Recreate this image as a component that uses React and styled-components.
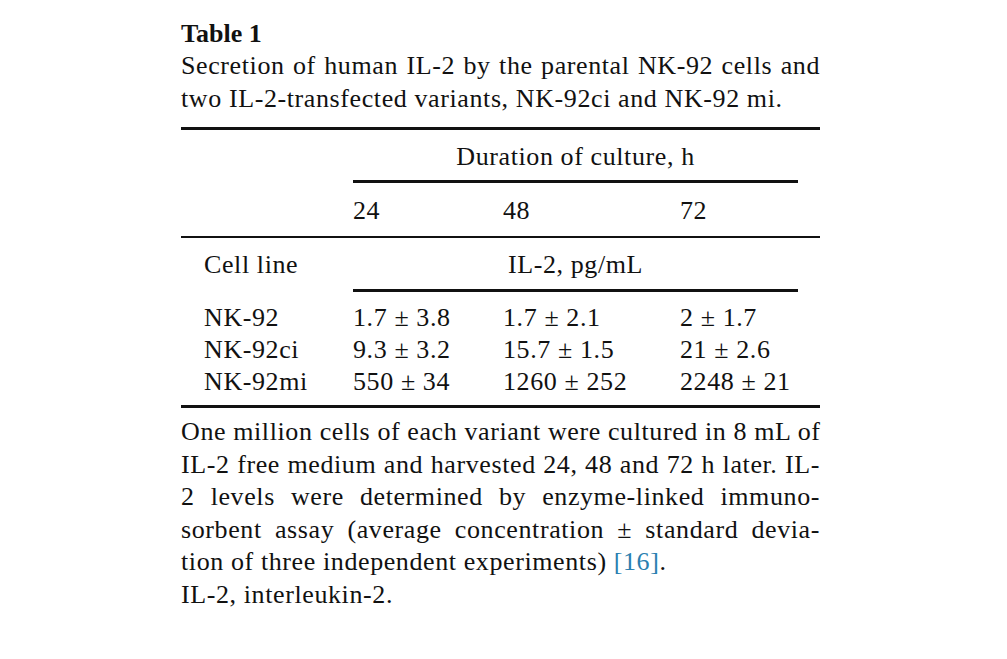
import styled, { createGlobalStyle } from 'styled-components';

const GlobalStyle = createGlobalStyle`
  body {
    margin: 0;
    background: #ffffff;
    color: #111111;
    font-family: "Liberation Serif", "DejaVu Serif", serif;
  }
`;

const Page = styled.div`
  width: 1007px;
  height: 659px;
  padding: 18px 0 0 181px;
  box-sizing: border-box;
`;

const Article = styled.div`
  width: 639px;
  font-size: 26px;
  letter-spacing: 0.6px;
`;

const Title = styled.h2`
  margin: 0;
  font-size: 26px;
  line-height: 32px;
  font-weight: bold;
  letter-spacing: 0;
`;

const Line = styled.div`
  line-height: 32.5px;
  white-space: nowrap;
  text-align: ${(p) => (p.$full ? 'justify' : 'left')};
  text-align-last: ${(p) => (p.$full ? 'justify' : 'left')};
`;

const Table = styled.div`
  display: grid;
  grid-template-columns: 172px 150px 177px 118px 22px;
  margin: 12px 0 8px;
  border-top: 3px solid #111;
  border-bottom: 3px solid #111;
`;

const Cell = styled.div`
  grid-column: ${(p) => p.$span || 'auto'};
  padding-left: ${(p) => (p.$label ? '23px' : '0')};
  text-align: ${(p) => (p.$center ? 'center' : 'left')};
  line-height: 32px;
  white-space: nowrap;
`;

const Rule = styled.div`
  grid-column: ${(p) => p.$span};
  height: ${(p) => p.$h || 3}px;
  background: #111;
`;

const Gap = styled.div`
  grid-column: 1 / -1;
  height: ${(p) => p.$h}px;
`;

const Ref = styled.span`
  color: #2a7fb0;
`;

const rows = [
  ['NK-92', '1.7 ± 3.8', '1.7 ± 2.1', '2 ± 1.7'],
  ['NK-92ci', '9.3 ± 3.2', '15.7 ± 1.5', '21 ± 2.6'],
  ['NK-92mi', '550 ± 34', '1260 ± 252', '2248 ± 21'],
];

export default function App() {
  return (
    <Page>
      <GlobalStyle />
      <Article>
        <Title>Table 1</Title>
        <Line $full>Secretion of human IL-2 by the parental NK-92 cells and</Line>
        <Line>two IL-2-transfected variants, NK-92ci and NK-92 mi.</Line>
        <Table>
          <Gap $h={11} />
          <Cell $span="2 / 5" $center>Duration of culture, h</Cell>
          <Gap $h={7} />
          <Rule $span="2 / 5" />
          <Gap $h={12} />
          <Cell $span="2 / 3">24</Cell>
          <Cell $span="3 / 4">48</Cell>
          <Cell $span="4 / 5">72</Cell>
          <Gap $h={9} />
          <Rule $span="1 / -1" $h={2} />
          <Gap $h={11} />
          <Cell $span="1 / 2" $label>Cell line</Cell>
          <Cell $span="2 / 5" $center>IL-2, pg/mL</Cell>
          <Gap $h={8} />
          <Rule $span="2 / 5" />
          <Gap $h={10} />
          {rows.map((r) => [
            <Cell key={r[0]} $span="1 / 2" $label>{r[0]}</Cell>,
            <Cell key={r[0] + 'a'} $span="2 / 3">{r[1]}</Cell>,
            <Cell key={r[0] + 'b'} $span="3 / 4">{r[2]}</Cell>,
            <Cell key={r[0] + 'c'} $span="4 / 5">{r[3]}</Cell>,
          ])}
          <Gap $h={7} />
        </Table>
        <Line $full>One million cells of each variant were cultured in 8 mL of</Line>
        <Line $full>IL-2 free medium and harvested 24, 48 and 72 h later. IL-</Line>
        <Line $full>2 levels were determined by enzyme-linked immuno-</Line>
        <Line $full>sorbent assay (average concentration ± standard devia-</Line>
        <Line>
          tion of three independent experiments) <Ref>[16]</Ref>.
        </Line>
        <Line>IL-2, interleukin-2.</Line>
      </Article>
    </Page>
  );
}
